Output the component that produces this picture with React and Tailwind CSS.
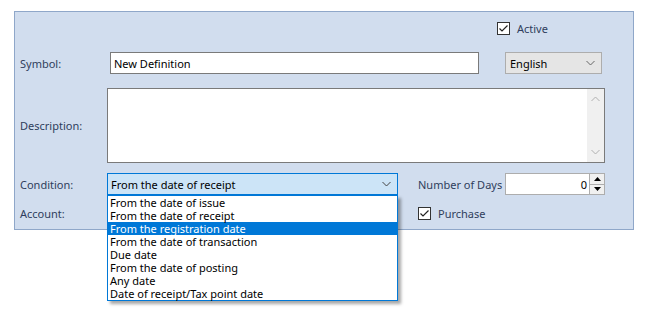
import React from 'react';

const options = [
    'From the date of issue',
    'From the date of receipt',
    'From the registration date',
    'From the date of transaction',
    'Due date',
    'From the date of posting',
    'Any date',
    'Date of receipt/Tax point date',
];

const Check = () => (
    <span className="w-[13px] h-[13px] shrink-0 border border-[#333] bg-white flex items-center justify-center">
        <svg width="11" height="11" viewBox="0 0 11 11">
            <path d="M1.5 5.5 L4 8 L9.5 2.5" fill="none" stroke="#222" strokeWidth="1.2" />
        </svg>
    </span>
);

const Chevron = ({ color = '#555', up = false }) => (
    <svg width="9" height="6" viewBox="0 0 9 6">
        <path d={up ? 'M0.5 5 L4.5 1 L8.5 5' : 'M0.5 1 L4.5 5 L8.5 1'} fill="none" stroke={color} strokeWidth="1" />
    </svg>
);

export default function App() {
    return (
        <div className="w-[664px] h-[312px] bg-white pt-[11px] pl-[14px] text-[11px] leading-[13px] whitespace-nowrap font-['Segoe_UI','Noto_Sans',sans-serif]">
            <div className="w-[620px] h-[219px] border border-[#8fa7c9] bg-[#d1ddee] pl-[5px] text-[#2f3d5c]">
                {/* Active */}
                <div className="mt-[10px] h-[13px] flex items-center pl-[477px]">
                    <Check />
                    <span className="ml-[7px]">Active</span>
                </div>

                {/* Symbol */}
                <div className="mt-[17px] h-[22px] flex items-center">
                    <span className="w-[90px] shrink-0">Symbol:</span>
                    <div className="w-[369px] h-[22px] border border-[#7a7a7a] bg-white flex items-center pl-[3px] text-black">
                        New Definition
                    </div>
                    <div className="ml-[26px] w-[97px] h-[22px] border border-[#adadad] bg-[#e5e5e5] flex items-center justify-between pl-[4px] pr-[6px] text-black">
                        English
                        <Chevron color="#666" />
                    </div>
                </div>

                {/* Description */}
                <div className="mt-[14px] h-[75px] flex items-center">
                    <span className="w-[87px] shrink-0">Description:</span>
                    <div className="w-[498px] h-[75px] border border-[#7a7a7a] bg-white flex justify-end">
                        <div className="w-[17px] h-full bg-[#f0f0f0] flex flex-col items-center justify-between py-[7px]">
                            <Chevron color="#b0b0b0" up />
                            <Chevron color="#b0b0b0" />
                        </div>
                    </div>
                </div>

                {/* Condition */}
                <div className="mt-[10px] h-[22px] flex items-center">
                    <span className="w-[87px] shrink-0">Condition:</span>
                    <div className="relative w-[291px] h-[22px] shrink-0">
                        <div className="w-full h-full border border-[#0078d7] bg-[#cce4f7] flex items-center justify-between pl-[3px] pr-[6px] text-black">
                            From the date of receipt
                            <Chevron color="#444" />
                        </div>
                        <div className="absolute left-0 top-[22px] w-[291px] border border-[#0078d7] bg-white text-black shadow-[3px_3px_3px_rgba(0,0,0,0.35)] z-10">
                            {options.map((o, i) => (
                                <div
                                    key={o}
                                    className={`h-[13px] leading-[13px] pl-[2px] ${i === 2 ? 'bg-[#0078d7] text-white' : ''}`}
                                >
                                    {o}
                                </div>
                            ))}
                        </div>
                    </div>
                    <span className="ml-[20px] w-[87px] shrink-0">Number of Days</span>
                    <div className="w-[100px] h-[22px] shrink-0 border border-[#adadad] bg-white flex items-center justify-end">
                        <span className="text-black pr-[2px]">0</span>
                        <div className="w-[15px] h-full flex flex-col border-l border-[#adadad]">
                            <div className="flex-1 bg-[#f0f0f0] border-b border-[#adadad] flex items-center justify-center">
                                <svg width="7" height="4" viewBox="0 0 7 4"><path d="M0 4 L3.5 0 L7 4 Z" fill="#000" /></svg>
                            </div>
                            <div className="flex-1 bg-[#f0f0f0] flex items-center justify-center">
                                <svg width="7" height="4" viewBox="0 0 7 4"><path d="M0 0 L3.5 4 L7 0 Z" fill="#000" /></svg>
                            </div>
                        </div>
                    </div>
                </div>

                {/* Account */}
                <div className="mt-[12px] h-[13px] flex items-center">
                    <span className="w-[398px] shrink-0">Account:</span>
                    <Check />
                    <span className="ml-[7px]">Purchase</span>
                </div>
            </div>
        </div>
    );
}
